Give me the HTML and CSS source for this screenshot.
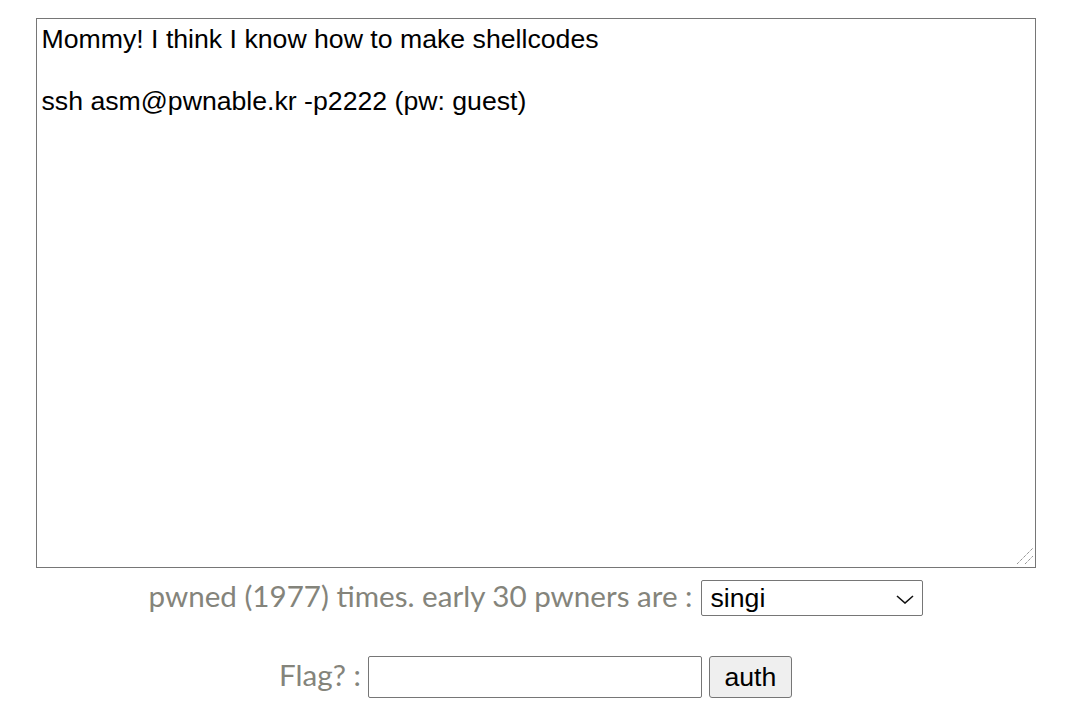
FILE: index.html
```html
<!DOCTYPE html>
<html>
<head>
<meta charset="utf-8">
<link rel="stylesheet" href="styles.css">
</head>
<body>
<main class="page">
  <div class="desc-wrap">
    <textarea class="desc" readonly>Mommy! I think I know how to make shellcodes

ssh asm@pwnable.kr -p2222 (pw: guest)</textarea>
    <svg class="grip" width="18" height="18" viewBox="0 0 18 18" aria-hidden="true">
      <line x1="1" y1="17" x2="17" y2="1" stroke="#666" stroke-width="1" stroke-dasharray="1 1"/>
      <line x1="9" y1="17" x2="17" y2="9" stroke="#666" stroke-width="1" stroke-dasharray="1 1"/>
    </svg>
  </div>
  <div class="row row-pwned">
    <span class="label">pwned (1977) times. early 30 pwners are :</span>
    <span class="select-wrap">
      <select class="pwners">
        <option>singi</option>
      </select>
      <svg class="chev" width="18" height="9" viewBox="0 0 18 9" aria-hidden="true">
        <polyline points="1,1 9,8 17,1" fill="none" stroke="#111" stroke-width="1.6"/>
      </svg>
    </span>
  </div>
  <form class="row row-flag">
    <span class="label">Flag? :</span>
    <input class="flag" type="text">
    <button class="auth" type="button">auth</button>
  </form>
</main>
</body>
</html>
```
FILE: styles.css
```css
html, body {
  margin: 0;
  padding: 0;
  background: #ffffff;
}
.page {
  display: flex;
  flex-direction: column;
  align-items: center;
  padding-top: 18px;
}
.desc-wrap {
  position: relative;
  width: 1000px;
  height: 550px;
}
.desc {
  display: block;
  box-sizing: border-box;
  width: 1000px;
  height: 550px;
  margin: 0;
  padding: 5px 5px;
  border: 1px solid #767676;
  font-family: "Liberation Sans", Arial, sans-serif;
  font-size: 26.67px;
  line-height: 31px;
  color: #000;
  resize: none;
  outline: none;
}
.grip {
  position: absolute;
  right: 2px;
  bottom: 3px;
}
.row {
  display: flex;
  align-items: center;
  gap: 8px;
  margin: 0;
}
.row-pwned {
  margin-top: 12px;
}
.row-flag {
  margin-top: 40px;
  gap: 7px;
}
.label {
  font-family: Lato, "Open Sans", sans-serif;
  font-size: 29.6px;
  line-height: 32px;
  color: #84847b;
  padding-bottom: 4px;
}
.select-wrap {
  position: relative;
  display: inline-block;
  height: 36px;
}
.pwners {
  -webkit-appearance: none;
  appearance: none;
  display: block;
  box-sizing: border-box;
  width: 222px;
  height: 36px;
  font-family: "Liberation Sans", Arial, sans-serif;
  font-size: 26.67px;
  color: #000;
  border: 1px solid #767676;
  border-radius: 2px;
  background: #fff;
  padding: 0 30px 0 9px;
  margin: 0;
}
.chev {
  position: absolute;
  right: 9px;
  top: 15px;
  pointer-events: none;
}
.flag {
  box-sizing: border-box;
  width: 334px;
  height: 42px;
  border: 1px solid #767676;
  border-radius: 2px;
  font-family: "Liberation Sans", Arial, sans-serif;
  font-size: 26.67px;
  margin: 0;
}
.auth {
  box-sizing: border-box;
  width: 83px;
  height: 42px;
  border: 1px solid #767676;
  border-radius: 3px;
  background: #efefef;
  font-family: "Liberation Sans", Arial, sans-serif;
  font-size: 26.67px;
  color: #000;
  padding: 0;
  margin: 0;
}
```
